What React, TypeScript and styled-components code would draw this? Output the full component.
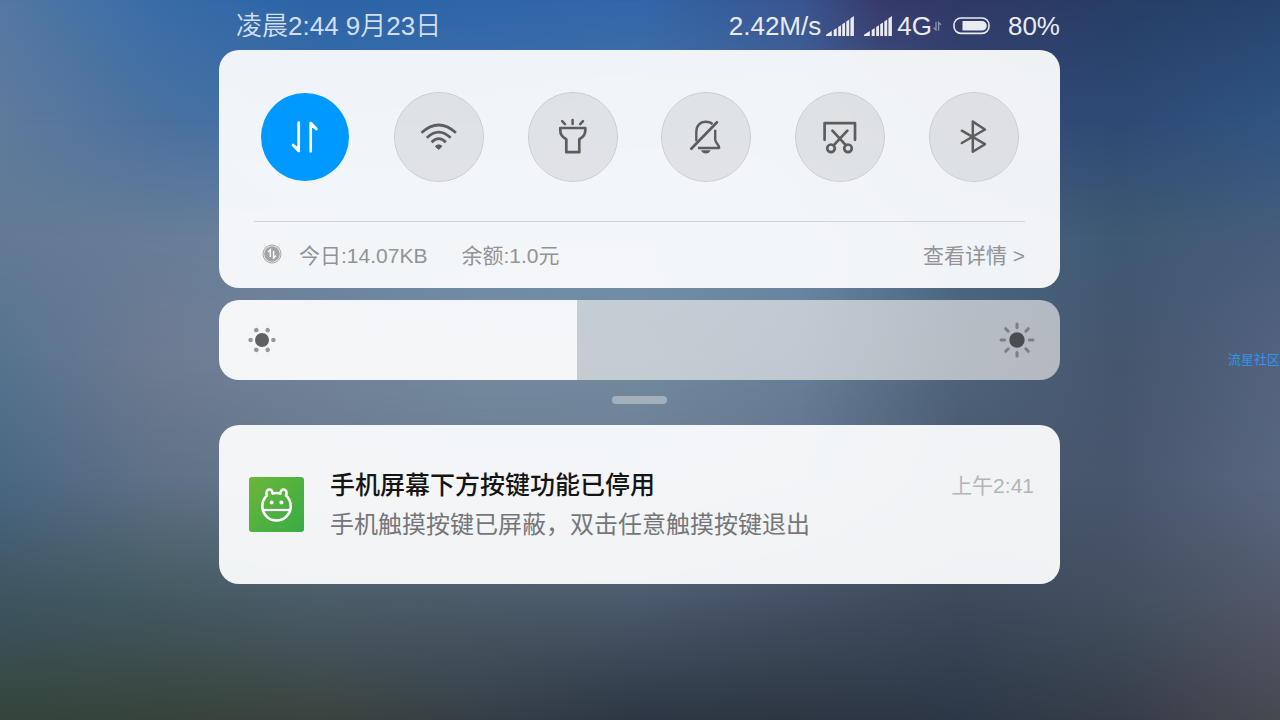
import React, { useState } from "react";
import styled, { createGlobalStyle, css } from "styled-components";

const GlobalStyle = createGlobalStyle`
  *, *::before, *::after { box-sizing: border-box; }
  body {
    margin: 0;
    background: #2d3643;
    font-family: "Liberation Sans", "Noto Sans CJK SC", sans-serif;
  }
  button { font: inherit; }
  svg { display: block; flex: none; }
`;

const wallpaperRows: string[][] = [
  ["#5478a2", "#386da9", "#2c64a6", "#2f66a9", "#3266a8", "#3a5590 62.5%", "#383a6b 68.75%", "#303965 75%", "#273e66", "#26446e"],
  ["#5f7b9c", "#4a719f", "#3d70a8", "#3f72a8", "#4676a8", "#44699c", "#344a78", "#2e4a74", "#2f5580"],
  ["#637a95", "#687d97", "#6a839f", "#6f8ca8", "#708ea8", "#6a88a2", "#496683", "#3f5973", "#475d7c"],
  ["#56738f", "#6e7b91", "#72849b", "#748b9f", "#738a9f", "#68809a", "#4e647a", "#45566d", "#54627e"],
  ["#4a6782", "#5f7186", "#68788a", "#6b7d90", "#6b7e92", "#60748a", "#48586e", "#48566d", "#58677f"],
  ["#3d5560", "#435960", "#4a5c68", "#4b5b69", "#4b5a6d", "#445064", "#3c4a5c", "#434f60", "#52586a"],
  ["#34453b", "#37433a", "#3b433f", "#363f46", "#2d3643", "#2d3642", "#2d3747", "#363d48", "#47494f"],
];

const Screen = styled.div`
  position: relative;
  min-height: 100vh;
  padding-right: 1px;
  overflow: hidden;
  isolation: isolate;
`;

const Wallpaper = styled.div`
  position: absolute;
  inset: 0;
  z-index: -1;
`;

/* Each band fades in over the one above it, which blends the rows smoothly. */
const Band = styled.div<{ $colors: string[]; $index: number; $last: number }>`
  position: absolute;
  inset: 0;
  background: linear-gradient(to right, ${(p) => p.$colors.join(", ")});
  ${(p) =>
    p.$index > 0 &&
    css`
      mask-image: linear-gradient(
        to bottom,
        transparent calc(100% * ${p.$index - 1} / ${p.$last}),
        #000 calc(100% * ${p.$index} / ${p.$last})
      );
    `}
`;

const Shade = styled.main`
  display: flex;
  flex-direction: column;
  width: 100%;
  max-width: 841px;
  margin: 0 auto;
`;

const StatusBar = styled.header`
  display: flex;
  align-items: center;
  justify-content: space-between;
  height: 50px;
  padding: 2px 0 0 17px;
  font-size: 26px;
  line-height: 48px;
  white-space: nowrap;
`;

const DateTime = styled.time`
  color: #d3dff0;
  font-weight: 350;
`;

const StatusGroup = styled.div<{ $gap: number }>`
  display: flex;
  align-items: center;
  gap: ${(p) => p.$gap}px;
  color: #e9ebf2;
`;

const Card = styled.section`
  background: rgba(252, 253, 254, 0.94);
  border-radius: 20px;
`;

const Toggles = styled.div`
  display: flex;
  justify-content: space-between;
  padding: 42px 41px 39px;
`;

const Toggle = styled.button<{ $active: boolean }>`
  display: grid;
  place-items: center;
  width: 90px;
  height: 90px;
  padding: 0;
  border-radius: 50%;
  border: 1px solid ${(p) => (p.$active ? "transparent" : "#c9cbce")};
  background: ${(p) => (p.$active ? "#0099ff" : "rgba(40, 44, 40, 0.09)")};
  background-clip: padding-box;
  color: ${(p) => (p.$active ? "#ffffff" : "#5c5d5f")};
  cursor: pointer;
`;

const Usage = styled.div`
  display: flex;
  align-items: center;
  height: 67px;
  margin: 0 35px;
  padding: 0 0 2px 8px;
  border-top: 1px solid #d2d5d8;
  color: #929395;
  font-size: 21px;
  white-space: nowrap;
`;

const UsageItem = styled.span`
  margin: 0 17px;
`;

const DetailsLink = styled.a`
  margin-left: auto;
  color: inherit;
  text-decoration: none;
`;

const Brightness = styled.div`
  position: relative;
  height: 80px;
  margin-top: 12px;
  border-radius: 20px;
  overflow: hidden;
`;

const BrightnessInput = styled.input`
  appearance: none;
  display: block;
  width: 100%;
  height: 100%;
  margin: 0;
  cursor: pointer;
  background: linear-gradient(
    to right,
    rgba(252, 253, 254, 0.94) var(--level),
    rgba(252, 248, 245, 0.6) var(--level)
  );

  &::-webkit-slider-thumb {
    appearance: none;
    width: 1px;
    height: 80px;
    background: transparent;
  }
`;

const SliderIcons = styled.div`
  position: absolute;
  inset: 0;
  display: flex;
  align-items: center;
  justify-content: space-between;
  padding: 0 25px;
  pointer-events: none;
`;

const Handle = styled.button`
  align-self: center;
  width: 55px;
  height: 8px;
  margin: 16px 0 21px;
  padding: 0;
  border: 0;
  border-radius: 4px;
  background: rgba(255, 255, 255, 0.36);
`;

const Notification = styled(Card)`
  display: flex;
  align-items: center;
  gap: 26px;
  min-height: 159px;
  padding: 0 26px 0 30px;
`;

const Message = styled.div`
  flex: 1;
  line-height: 39px;
`;

const Heading = styled.div`
  display: flex;
  justify-content: space-between;
  align-items: center;
`;

const Title = styled.h2`
  margin: 0;
  font-size: 25px;
  font-weight: 500;
  color: #151515;
`;

const Received = styled.time`
  font-size: 21px;
  color: #b4b5b7;
`;

const Body = styled.p`
  margin: 0;
  font-size: 24px;
  color: #757678;
`;

const Watermark = styled.span`
  position: absolute;
  right: 0;
  top: 50%;
  transform: translateY(-50%);
  font-size: 13px;
  line-height: 20px;
  color: #2b96ef;
  white-space: nowrap;
`;

const Glyph = ({ children }: { children: React.ReactNode }) => (
  <svg
    width="44"
    height="44"
    viewBox="-22 -22 44 44"
    fill="none"
    stroke="currentColor"
    strokeWidth="2.7"
    strokeLinecap="round"
    strokeLinejoin="round"
    aria-hidden="true"
  >
    {children}
  </svg>
);

const DataIcon = () => (
  <Glyph>
    <path d="M-6.3-14.3V14L-12 8M5.7 14.3V-14L11.4-8" strokeWidth="2.7" />
    <path d="M-6.3 14L-12 8L-6.3 10.5ZM5.7-14L11.4-8L5.7-10.5Z" fill="currentColor" strokeWidth="1" />
  </Glyph>
);

const WifiIcon = () => (
  <Glyph>
    <path d="M-17.5-4.2Q-.3-19.8 16.9-4.2M-12.2 .7Q-.3-10.5 11.6 .7M-7.4 5.2Q-.3-2 6.8 5.2" strokeLinecap="butt" strokeWidth="2.8" />
    <path d="M-2.9 8.6Q-.3 7 2.3 8.6L2.6 9.8L-.3 12.4L-3.2 9.8Z" fill="currentColor" strokeWidth="1" />
  </Glyph>
);

const TorchIcon = () => (
  <Glyph>
    <path d="M-12.7-9H12.3V-6.5C12.3-1.5 9.5 .5 6.3 2.2V15.2H-6.7V2.2C-10 .5-12.7-1.5-12.7-6.5Z" />
    <path d="M-.4-17V-13M-10.8-15.8L-8-12.8M10-15.8L7.2-12.8" strokeWidth="2.5" />
  </Glyph>
);

const MuteIcon = () => (
  <Glyph>
    <path d="M-14.7 11.7L11-14.7" />
    <path d="M-9.7 4.2V-5.2C-9.7-11.5-5.5-15.2-.3-15.2C2.5-15.2 5-14.3 6.5-12.8M9.2-7.2V2.5C9.2 5.5 13.4 8 13.2 11H-8" strokeLinecap="butt" strokeWidth="2.4" />
    <path d="M-5 13.3H4.6C3.5 15.6 2 16.5-.2 16.5C-2.4 16.5-3.9 15.6-5 13.3Z" fill="currentColor" stroke="none" />
  </Glyph>
);

const ScreenshotIcon = () => (
  <Glyph>
    <path d="M-15.4 2.8V-13.8H15V2.8" />
    <path d="M-7.6-6.3L6 8.4M7.4-6.3L-6.4 8.4" />
    <circle cx="-9" cy="11.3" r="3.8" />
    <circle cx="8" cy="11.3" r="3.8" />
  </Glyph>
);

const BluetoothIcon = () => (
  <Glyph>
    <path d="M-12.2-6.3L11 7.2L-1.2 14.8V-15.4L11-7.5L-12.2 6" strokeWidth="2.5" />
  </Glyph>
);

const SignalIcon = () => (
  <svg width="28" height="20" viewBox="0 0 28 20" fill="currentColor" aria-hidden="true">
    <path d="M0 20V18.8L5.8 15V20ZM7.7 20V14L10.7 12V20ZM12.2 20V11L15 9.2V20ZM16.2 20V8.2L19 6.4V20ZM20.3 20V5.4L23.2 3.6V20ZM24.4 20V2.4L27.9 0V20Z" />
  </svg>
);

const TinyArrows = () => (
  <svg width="10" height="10" viewBox="0 0 10 10" fill="none" stroke="currentColor" strokeWidth="1.3" opacity="0.5" aria-hidden="true">
    <path d="M4 1V9L1.6 6.6M6.6 9.5V1.5L9 3.8" />
  </svg>
);

const BatteryIcon = () => (
  <svg width="37" height="18" viewBox="0 0 37 18" fill="none" aria-hidden="true">
    <rect x="1" y="1" width="35" height="15.4" rx="7" stroke="currentColor" strokeWidth="1.6" />
    <path d="M9.5 4H29A4.8 4.8 0 0 1 29 13.6H9.5Z" fill="currentColor" />
  </svg>
);

const MeterIcon = () => (
  <svg width="20" height="20" viewBox="0 0 20 20" fill="none" aria-hidden="true">
    <circle cx="10" cy="10" r="9" stroke="#a3a4a6" strokeWidth="1" />
    <circle cx="10" cy="10" r="7.8" fill="#a3a4a6" />
    <path d="M6 8L8.3 5.8V13M11.6 6.8V14L14 11.6" stroke="#f6f7f9" strokeWidth="1.5" />
  </svg>
);

const DimIcon = () => (
  <svg width="36" height="36" viewBox="-18 -18 36 36" aria-hidden="true">
    <circle r="7" fill="#5f6062" />
    <g fill="#97989a">
      {[0, 60, 120, 180, 240, 300].map((a) => (
        <circle key={a} cx="11.4" r="2.3" transform={`rotate(${a})`} />
      ))}
    </g>
  </svg>
);

const BrightIcon = () => (
  <svg width="36" height="36" viewBox="-18 -18 36 36" aria-hidden="true">
    <circle r="7.7" fill="#4a4d50" />
    <g stroke="#7a7f86" strokeWidth="3" strokeLinecap="round">
      {[0, 45, 90, 135, 180, 225, 270, 315].map((a) => (
        <path key={a} d="M12.4 0H16" transform={`rotate(${a})`} />
      ))}
    </g>
  </svg>
);

const AppIcon = () => (
  <svg width="55" height="55" viewBox="0 0 55 55" fill="none" aria-hidden="true">
    <defs>
      <linearGradient id="leaf" x1="0" y1="0" x2="1" y2="1">
        <stop offset="0" stopColor="#6cb63a" />
        <stop offset="1" stopColor="#37ac45" />
      </linearGradient>
    </defs>
    <rect width="55" height="55" rx="3" fill="url(#leaf)" />
    <path
      d="M23.6 16.6C24 10.6 15.4 11.2 18 18.4C14.8 21.4 13.3 25 13.3 29.3A14.2 14.2 0 0 0 41.7 29.3C41.7 25 40.2 21.4 37 18.4C39.6 11.2 31 10.6 31.4 16.6Q27.5 15.4 23.6 16.6Z"
      stroke="#fff"
      strokeWidth="2.6"
      strokeLinejoin="round"
    />
    <path d="M14 33H41" stroke="#fff" strokeWidth="2.2" />
    <circle cx="22.6" cy="25.6" r="2" fill="#fff" />
    <circle cx="32.4" cy="25.6" r="2" fill="#fff" />
  </svg>
);

const toggles = [
  { label: "移动数据", Icon: DataIcon },
  { label: "WLAN", Icon: WifiIcon },
  { label: "手电筒", Icon: TorchIcon },
  { label: "静音", Icon: MuteIcon },
  { label: "截屏", Icon: ScreenshotIcon },
  { label: "蓝牙", Icon: BluetoothIcon },
];

export default function App() {
  const [active, setActive] = useState<string[]>(["移动数据"]);
  const [level, setLevel] = useState(426);

  const flip = (label: string) =>
    setActive((on) => (on.includes(label) ? on.filter((l) => l !== label) : [...on, label]));

  return (
    <Screen>
      <GlobalStyle />
      <Wallpaper>
        {wallpaperRows.map((colors, i) => (
          <Band key={i} $colors={colors} $index={i} $last={wallpaperRows.length - 1} />
        ))}
      </Wallpaper>

      <Shade>
        <StatusBar>
          <DateTime>凌晨2:44 9月23日</DateTime>
          <StatusGroup $gap={18}>
            <StatusGroup $gap={11}>
              <StatusGroup $gap={5}>
                <span>2.42M/s</span>
                <StatusGroup $gap={10}>
                  <SignalIcon />
                  <SignalIcon />
                </StatusGroup>
                <StatusGroup $gap={0}>
                  <span>4G</span>
                  <TinyArrows />
                </StatusGroup>
              </StatusGroup>
              <BatteryIcon />
            </StatusGroup>
            <span>80%</span>
          </StatusGroup>
        </StatusBar>

        <Card>
          <Toggles>
            {toggles.map(({ label, Icon }) => (
              <Toggle
                key={label}
                type="button"
                aria-label={label}
                aria-pressed={active.includes(label)}
                $active={active.includes(label)}
                onClick={() => flip(label)}
              >
                <Icon />
              </Toggle>
            ))}
          </Toggles>
          <Usage>
            <MeterIcon />
            <UsageItem>今日:14.07KB</UsageItem>
            <UsageItem>余额:1.0元</UsageItem>
            <DetailsLink href="#details">查看详情 &gt;</DetailsLink>
          </Usage>
        </Card>

        <Brightness>
          <BrightnessInput
            type="range"
            aria-label="亮度"
            min={0}
            max={1000}
            value={level}
            onChange={(e) => setLevel(Number(e.target.value))}
            style={{ "--level": `${level / 10}%` } as React.CSSProperties}
          />
          <SliderIcons>
            <DimIcon />
            <BrightIcon />
          </SliderIcons>
        </Brightness>

        <Handle type="button" aria-label="展开" />

        <Notification>
          <AppIcon />
          <Message>
            <Heading>
              <Title>手机屏幕下方按键功能已停用</Title>
              <Received>上午2:41</Received>
            </Heading>
            <Body>手机触摸按键已屏蔽，双击任意触摸按键退出</Body>
          </Message>
        </Notification>
      </Shade>

      <Watermark>流星社区</Watermark>
    </Screen>
  );
}
